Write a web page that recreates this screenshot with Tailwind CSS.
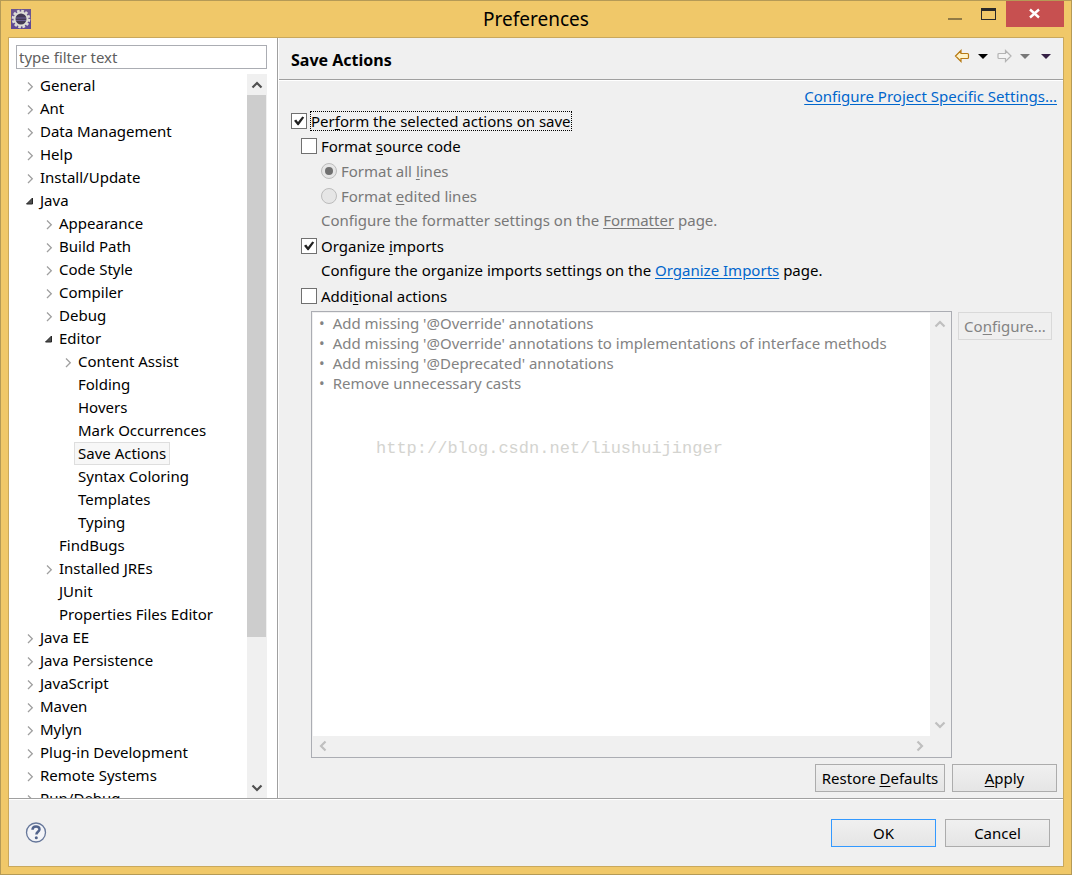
<!DOCTYPE html>
<html lang="en">
<head>
<meta charset="utf-8">
<title>Preferences</title>
<script src="https://cdn.jsdelivr.net/npm/@tailwindcss/browser@4"></script>
</head>
<body class="h-screen overflow-hidden font-['Noto_Sans','Open_Sans',sans-serif] text-[15px] leading-5 text-black">
<svg class="hidden">
  <symbol id="closed" viewBox="0 0 12 12"><path d="M4 2.5 8.3 6.7 4 11" fill="none" stroke="#a0a0a0" stroke-width="1.3"/></symbol>
  <symbol id="open" viewBox="0 0 12 12"><path d="M8.5 3v6h-6z" fill="#505050" stroke="#262626" stroke-width="1"/></symbol>
  <symbol id="tick" viewBox="0 0 16 16"><path d="M3 7.800 5.200 6.500 7 8.900 11.300 3.400 13.200 4.600 7.600 12.300h-1z" fill="#212121"/></symbol>
  <symbol id="up" viewBox="0 0 12 8"><path d="M1.500 6.500 6 2l4.500 4.500" fill="none" stroke="currentColor" stroke-width="2.200"/></symbol>
</svg>
<div class="flex h-full flex-col border border-[#b59a56] bg-[#f0c869] px-[7px] pb-[7px]">

  <header class="relative flex h-9 shrink-0 items-center justify-center">
    <svg class="absolute left-[3px] top-2 size-5" viewBox="0 0 20 20">
      <rect width="20" height="20" fill="#6a5590"/><rect y="11" width="20" height="9" fill="#5f4a94"/>
      <circle cx="10" cy="10" r="8" fill="none" stroke="#dcdcd6" stroke-width="2.600" stroke-dasharray="2.600 1.589"/>
      <circle cx="10" cy="10" r="6.500" fill="#433a55" stroke="#dcdcd6" stroke-width="2"/>
      <path d="M5 9h10M5 11.500h10" stroke="#6c6097" stroke-width="1"/>
    </svg>
    <h1 class="text-[19px] leading-6">Preferences</h1>
    <div class="absolute right-0 top-0 flex items-start">
      <button aria-label="Minimize" class="h-[26px] w-[33px]"><svg class="size-full" viewBox="0 0 33 26"><path d="M7 17h14v2H7z" fill="#917a45"/></svg></button>
      <button aria-label="Maximize" class="h-[26px] w-8"><svg class="size-full" viewBox="0 0 32 26"><path d="M7 7h15v12H7zM8 10v8h13v-8z" fill="#292929" fill-rule="evenodd"/></svg></button>
      <button aria-label="Close" class="h-[26px] w-[58px] bg-[#c75050]"><svg class="size-full" viewBox="0 0 58 26"><path d="m24 8.500 9 8m0-8-9 8" stroke="#fff" stroke-width="2.400"/></svg></button>
    </div>
  </header>

  <main class="flex min-h-0 grow flex-col border border-[#c9a85c] bg-[#f0f0f0]">
    <div class="flex min-h-0 grow border-b border-[#a0a0a0]">

      <nav class="flex w-[269px] shrink-0 flex-col border-r border-[#a0a0a0] bg-white pl-[7px] pr-[10px] pt-[7px]" aria-label="Preference pages">
        <input type="text" aria-label="Filter" placeholder="type filter text" class="h-6 w-full shrink-0 border border-[#abadb3] bg-white px-[2px] leading-5 placeholder:text-[#606060] focus:outline-none">
        <div class="mt-[5px] flex min-h-0 grow">
          <ul class="min-w-0 grow overflow-hidden pl-2 leading-[23px] whitespace-nowrap">
            <li class="flex h-[23px] items-center"><svg class="size-3"><use href="#closed"/></svg><span class="px-1">General</span></li>
            <li class="flex h-[23px] items-center"><svg class="size-3"><use href="#closed"/></svg><span class="px-1">Ant</span></li>
            <li class="flex h-[23px] items-center"><svg class="size-3"><use href="#closed"/></svg><span class="px-1">Data Management</span></li>
            <li class="flex h-[23px] items-center"><svg class="size-3"><use href="#closed"/></svg><span class="px-1">Help</span></li>
            <li class="flex h-[23px] items-center"><svg class="size-3"><use href="#closed"/></svg><span class="px-1">Install/Update</span></li>
            <li>
              <div class="flex h-[23px] items-center"><svg class="size-3"><use href="#open"/></svg><span class="px-1">Java</span></div>
              <ul class="pl-[19px]">
                <li class="flex h-[23px] items-center"><svg class="size-3"><use href="#closed"/></svg><span class="px-1">Appearance</span></li>
                <li class="flex h-[23px] items-center"><svg class="size-3"><use href="#closed"/></svg><span class="px-1">Build Path</span></li>
                <li class="flex h-[23px] items-center"><svg class="size-3"><use href="#closed"/></svg><span class="px-1">Code Style</span></li>
                <li class="flex h-[23px] items-center"><svg class="size-3"><use href="#closed"/></svg><span class="px-1">Compiler</span></li>
                <li class="flex h-[23px] items-center"><svg class="size-3"><use href="#closed"/></svg><span class="px-1">Debug</span></li>
                <li>
                  <div class="flex h-[23px] items-center"><svg class="size-3"><use href="#open"/></svg><span class="px-1">Editor</span></div>
                  <ul class="pl-[19px]">
                    <li class="flex h-[23px] items-center"><svg class="size-3"><use href="#closed"/></svg><span class="px-1">Content Assist</span></li>
                    <li class="flex h-[23px] pl-3"><span class="px-1">Folding</span></li>
                    <li class="flex h-[23px] pl-3"><span class="px-1">Hovers</span></li>
                    <li class="flex h-[23px] pl-3"><span class="px-1">Mark Occurrences</span></li>
                    <li class="flex h-[23px] pl-3"><span class="border border-[#dedede] bg-[#f7f7f7] px-[3px] leading-[21px]">Save Actions</span></li>
                    <li class="flex h-[23px] pl-3"><span class="px-1">Syntax Coloring</span></li>
                    <li class="flex h-[23px] pl-3"><span class="px-1">Templates</span></li>
                    <li class="flex h-[23px] pl-3"><span class="px-1">Typing</span></li>
                  </ul>
                </li>
                <li class="flex h-[23px] pl-3"><span class="px-1">FindBugs</span></li>
                <li class="flex h-[23px] items-center"><svg class="size-3"><use href="#closed"/></svg><span class="px-1">Installed JREs</span></li>
                <li class="flex h-[23px] pl-3"><span class="px-1">JUnit</span></li>
                <li class="flex h-[23px] pl-3"><span class="px-1">Properties Files Editor</span></li>
              </ul>
            </li>
            <li class="flex h-[23px] items-center"><svg class="size-3"><use href="#closed"/></svg><span class="px-1">Java EE</span></li>
            <li class="flex h-[23px] items-center"><svg class="size-3"><use href="#closed"/></svg><span class="px-1">Java Persistence</span></li>
            <li class="flex h-[23px] items-center"><svg class="size-3"><use href="#closed"/></svg><span class="px-1">JavaScript</span></li>
            <li class="flex h-[23px] items-center"><svg class="size-3"><use href="#closed"/></svg><span class="px-1">Maven</span></li>
            <li class="flex h-[23px] items-center"><svg class="size-3"><use href="#closed"/></svg><span class="px-1">Mylyn</span></li>
            <li class="flex h-[23px] items-center"><svg class="size-3"><use href="#closed"/></svg><span class="px-1">Plug-in Development</span></li>
            <li class="flex h-[23px] items-center"><svg class="size-3"><use href="#closed"/></svg><span class="px-1">Remote Systems</span></li>
            <li class="flex h-[23px] items-center"><svg class="size-3"><use href="#closed"/></svg><span class="px-1">Run/Debug</span></li>
          </ul>
          <div class="flex w-5 shrink-0 flex-col bg-[#f0f0f0] text-[#505050]">
            <button aria-label="Scroll up" class="flex h-[21px] items-center justify-center"><svg class="h-2 w-3"><use href="#up"/></svg></button>
            <div class="mr-px basis-[542px] bg-[#cdcdcd]"></div>
            <button aria-label="Scroll down" class="mt-auto flex h-[21px] items-center justify-center"><svg class="h-2 w-3 rotate-180"><use href="#up"/></svg></button>
          </div>
        </div>
      </nav>

      <section class="flex min-w-0 grow flex-col border-l border-white">
        <div class="flex h-[42px] shrink-0 items-start justify-between border-b border-[#a0a0a0] pl-3 pr-3">
          <h2 class="pt-3 text-base leading-5 font-bold">Save Actions</h2>
          <div class="flex h-4 items-center mt-[10px]">
            <button aria-label="Back" class="w-4"><svg class="h-4 w-4" viewBox="0 0 16 16"><path d="M1.500 8 7 2.500v3h6.500q1 0 1 1v3q0 1-1 1H7v3z" fill="#fff3c8" stroke="#b87a14" stroke-width="1.200"/></svg></button>
            <button aria-label="Back history" class="ml-2 w-[10px]"><svg class="h-4 w-[10px]" viewBox="0 0 10 16"><path d="M0 6h10L5 11z"/></svg></button>
            <button aria-label="Forward" class="ml-2 w-4"><svg class="h-4 w-4" viewBox="0 0 16 16"><path d="M15 8 9.500 2.500v3H3q-1 0-1 1v3q0 1 1 1h6.500v3z" fill="#f4f4f4" stroke="#b4b4b4" stroke-width="1.200"/></svg></button>
            <button aria-label="Forward history" class="ml-2 w-[10px]"><svg class="h-4 w-[10px]" viewBox="0 0 10 16"><path d="M0 6h10L5 11z" fill="#787878"/></svg></button>
            <button aria-label="View menu" class="ml-[11px] w-[10px]"><svg class="h-4 w-[10px]" viewBox="0 0 10 16"><path d="M0 6h10L5 11z" fill="#352045"/></svg></button>
          </div>
        </div>

        <div class="flex min-h-0 grow flex-col border-t border-white pb-[6px] pl-3 pr-[6px] pt-[5px]">
          <a href="#" class="self-end text-[#0066cc] underline underline-offset-2">Configure Project Specific Settings...</a>

          <div class="mt-[2px] flex flex-col">
            <label class="flex h-[25px] items-center gap-[3px]">
              <span class="grid"><input type="checkbox" checked class="peer col-start-1 row-start-1 size-4 appearance-none border border-[#707070] bg-white"><svg class="pointer-events-none col-start-1 row-start-1 hidden size-4 peer-checked:block"><use href="#tick"/></svg></span>
              <span class="border border-dotted border-black leading-[18px]">Per<u class="underline-offset-2">f</u>orm the selected actions on save</span>
            </label>
            <label class="ml-[10px] flex h-[25px] items-center gap-1">
              <input type="checkbox" class="size-4 appearance-none border border-[#707070] bg-white">
              <span>Format <u class="underline-offset-2">s</u>ource code</span>
            </label>
            <label class="ml-[30px] flex h-[25px] items-center gap-1 text-[#787878]">
              <span class="grid place-items-center"><input type="radio" name="scope" checked disabled class="peer col-start-1 row-start-1 size-4 appearance-none rounded-full border border-[#bcbcbc] bg-[#e6e6e6]"><span class="col-start-1 row-start-1 hidden size-2 rounded-full bg-[#707070] peer-checked:block"></span></span>
              <span>Format all <u class="underline-offset-2">l</u>ines</span>
            </label>
            <label class="ml-[30px] flex h-[25px] items-center gap-1 text-[#787878]">
              <input type="radio" name="scope" disabled class="size-4 appearance-none rounded-full border border-[#bcbcbc] bg-[#e6e6e6]">
              <span>Format <u class="underline-offset-2">e</u>dited lines</span>
            </label>
            <p class="ml-[30px] h-[25px] leading-[25px] text-[#787878]">Configure the formatter settings on the <a href="#" class="underline underline-offset-2">Formatter</a> page.</p>
            <label class="ml-[10px] flex h-[25px] items-center gap-1">
              <span class="grid"><input type="checkbox" checked class="peer col-start-1 row-start-1 size-4 appearance-none border border-[#707070] bg-white"><svg class="pointer-events-none col-start-1 row-start-1 hidden size-4 peer-checked:block"><use href="#tick"/></svg></span>
              <span>Organize <u class="underline-offset-2">i</u>mports</span>
            </label>
            <p class="ml-[30px] h-[25px] leading-[25px]">Configure the organize imports settings on the <a href="#" class="text-[#0066cc] underline underline-offset-2">Organize Imports</a> page.</p>
            <label class="ml-[10px] flex h-[25px] items-center gap-1">
              <input type="checkbox" class="size-4 appearance-none border border-[#707070] bg-white">
              <span>Addi<u class="underline-offset-2">t</u>ional actions</span>
            </label>
          </div>

          <div class="mt-[3px] flex min-h-0 grow items-start gap-[6px] pl-5 pr-[5px]">
            <div class="relative grid h-full min-w-0 grow grid-cols-[1fr_20px] grid-rows-[1fr_20px] border border-[#abadb3] bg-[#f0f0f0] p-px text-[#838383]">
              <ul class="bg-white pl-[6px]">
                <li class="flex gap-2"><span>•</span>Add missing '@Override' annotations</li>
                <li class="flex gap-2"><span>•</span>Add missing '@Override' annotations to implementations of interface methods</li>
                <li class="flex gap-2"><span>•</span>Add missing '@Deprecated' annotations</li>
                <li class="flex gap-2"><span>•</span>Remove unnecessary casts</li>
              </ul>
              <div class="flex flex-col items-center justify-between py-[7px] text-[#bfbfbf]">
                <svg class="h-2 w-3"><use href="#up"/></svg>
                <svg class="h-2 w-3 rotate-180"><use href="#up"/></svg>
              </div>
              <div class="flex items-center justify-between px-1 text-[#bfbfbf]">
                <svg class="h-2 w-3 -rotate-90"><use href="#up"/></svg>
                <svg class="h-2 w-3 rotate-90"><use href="#up"/></svg>
              </div>
              <span class="absolute left-16 top-[127px] font-['Liberation_Mono',monospace] text-[17px] text-[#d4d4d0]">http://blog.csdn.net/liushuijinger</span>
            </div>
            <button disabled class="mt-px h-7 w-[94px] shrink-0 border border-[#d9d9d9] bg-[#efefef] text-[#838383]">Co<u class="underline-offset-2">n</u>figure...</button>
          </div>

          <div class="mt-[6px] flex justify-end gap-[7px]">
            <button class="h-7 w-[130px] border border-[#acacac] bg-linear-to-b from-[#f0f0f0] to-[#e5e5e5]">Restore <u class="underline-offset-2">D</u>efaults</button>
            <button class="h-7 w-[105px] border border-[#acacac] bg-linear-to-b from-[#f0f0f0] to-[#e5e5e5]"><u class="underline-offset-2">A</u>pply</button>
          </div>
        </div>
      </section>
    </div>

    <footer class="flex h-[67px] shrink-0 items-center justify-between border-t border-white pl-4 pr-[13px]">
      <button aria-label="Help"><svg class="size-[22px]" viewBox="0 0 22 22"><circle cx="11" cy="10.500" r="9.500" fill="#f3f4f8" stroke="#66779a" stroke-width="1.300"/><path d="M7.500 7.800C7.500 3.400 14.500 3.500 14.500 7.200c0 2.600-3.100 2.600-3.100 5.300" fill="none" stroke="#51638c" stroke-width="2.500"/><circle cx="11.300" cy="15.700" r="1.500" fill="#51638c"/></svg></button>
      <div class="flex gap-[9px]">
        <button class="h-7 w-[105px] border border-[#3399ff] bg-linear-to-b from-[#f0f0f0] to-[#e5e5e5]">OK</button>
        <button class="h-7 w-[105px] border border-[#acacac] bg-linear-to-b from-[#f0f0f0] to-[#e5e5e5]">Cancel</button>
      </div>
    </footer>
  </main>
</div>
</body>
</html>
